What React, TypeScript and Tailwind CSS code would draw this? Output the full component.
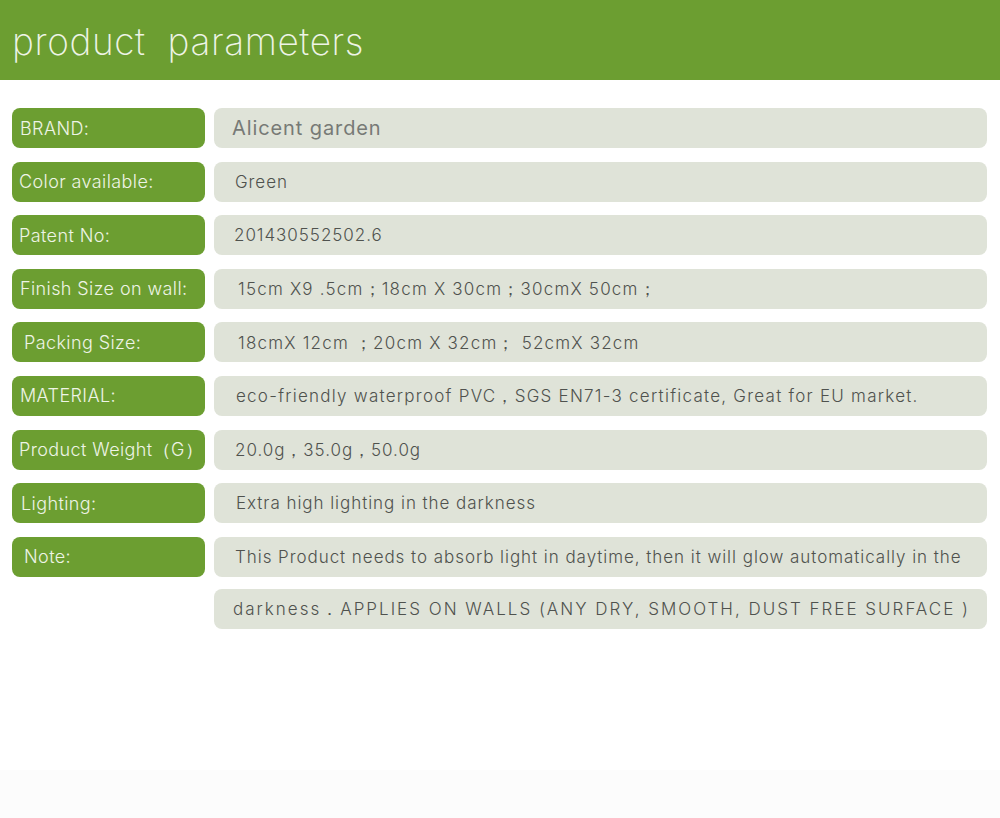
const rows = [
  { label: 'BRAND:', value: 'Alicent garden', strong: true, lx: 'pl-2', vx: 'pl-[18px]' },
  { label: 'Color available:', value: 'Green', lx: 'pl-[7px]', vx: 'pl-[21px]' },
  { label: 'Patent No:', value: '201430552502.6', lx: 'pl-[7px]', vx: 'pl-[20px]' },
  {
    label: 'Finish Size on wall:',
    value: '15cm X9 .5cm；18cm X 30cm；30cmX 50cm；',
    lx: 'pl-[8px]',
    vx: 'pl-[24px] tracking-[1.2px]',
  },
  {
    label: 'Packing Size:',
    value: '18cmX 12cm ；20cm X 32cm； 52cmX 32cm',
    lx: 'pl-[12px]',
    vx: 'pl-[24px] tracking-[1.2px]',
  },
  {
    label: 'MATERIAL:',
    value: 'eco-friendly waterproof PVC，SGS EN71-3 certificate, Great for EU market.',
    lx: 'pl-[8px]',
    vx: 'pl-[22px] tracking-[1.25px]',
  },
  { label: 'Product Weight（G）', value: '20.0g，35.0g，50.0g', lx: 'pl-[7px]', vx: 'pl-[21px]' },
  { label: 'Lighting:', value: 'Extra high lighting in the darkness', lx: 'pl-[9px]', vx: 'pl-[22px]' },
  {
    label: 'Note:',
    value: 'This Product needs to absorb light in daytime, then it will glow automatically in the',
    lx: 'pl-[12px]',
    vx: 'pl-[21px] tracking-[0.85px]',
  },
]

const font = "font-['Inter','Liberation_Sans',sans-serif]"

export default function App() {
  return (
    <div className={`flex h-[818px] w-[1000px] flex-col bg-white ${font}`}>
      <header className="flex h-20 items-center bg-[#6c9e31] pl-[12px] pt-1">
        <h1 className="whitespace-pre text-[37px] font-extralight tracking-[0.6px] text-[#eef4e6]">
          product  parameters
        </h1>
      </header>

      <div className="mt-7 flex flex-col gap-[13.6px] pl-3 pr-[13px]">
        {rows.map((row) => (
          <div key={row.label} className="flex h-10 gap-[9px]">
            <div
              className={`flex w-[193px] shrink-0 items-center overflow-hidden whitespace-nowrap rounded-lg bg-[#6c9e31] text-[18px] font-light tracking-[0.4px] text-[#eef4e6] ${row.lx}`}
            >
              {row.label}
            </div>
            <div
              className={`flex flex-1 items-center whitespace-nowrap rounded-lg bg-[#dfe3d8] ${
                row.strong
                  ? 'text-[20px] font-normal tracking-[0.9px] text-[#777a76]'
                  : 'pt-0.5 text-[17px] font-light tracking-[0.95px] text-[#4f524e]'
              } ${row.vx}`}
            >
              {row.value}
            </div>
          </div>
        ))}
        <div className="-mt-[1.5px] flex h-10 gap-[9px]">
          <div className="w-[193px] shrink-0" />
          <div className="flex flex-1 items-center whitespace-nowrap rounded-lg bg-[#dfe3d8] pl-[19px] pt-0.5 text-[17px] font-light tracking-[2px] text-[#4f524e]">
            darkness．APPLIES ON WALLS (ANY DRY, SMOOTH, DUST FREE SURFACE )
          </div>
        </div>
      </div>

      <div className="flex-1" />
      <div className="h-12 bg-[#fcfcfc]" />
    </div>
  )
}
